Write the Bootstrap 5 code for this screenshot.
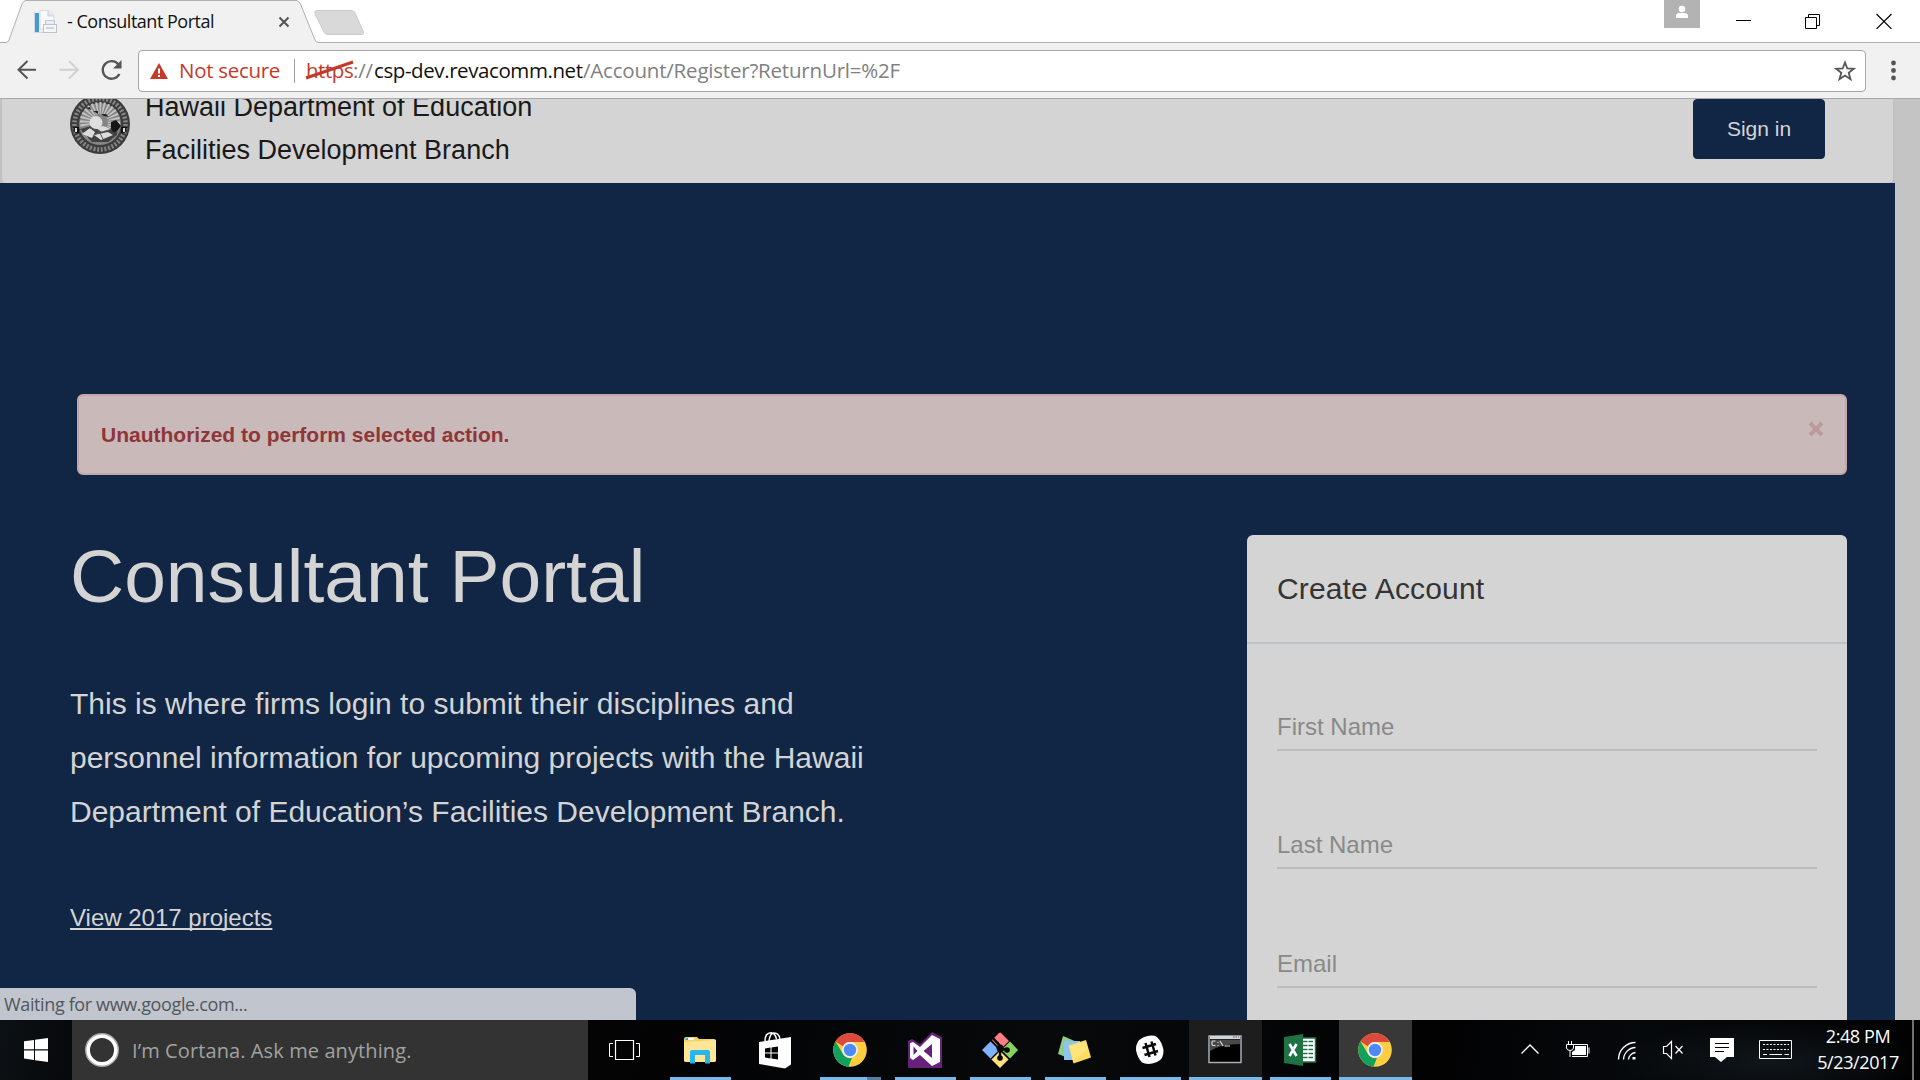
<!DOCTYPE html>
<html lang="en">
<head>
<meta charset="utf-8">
<title>- Consultant Portal</title>
<link href="https://cdn.jsdelivr.net/npm/bootstrap@5.3.0/dist/css/bootstrap.min.css" rel="stylesheet">
<style>
body{width:1920px;height:1080px;overflow:hidden;font-family:"Liberation Sans",Arial,sans-serif;background:#fff}
svg{display:block;flex:none}
.ui-font{font-family:"Open Sans","Noto Sans",sans-serif;white-space:nowrap}
.tab-strip{height:43px}
.tab-shape{z-index:0}
.tab-icon{margin-left:33px}
.tab-title{font-size:18px;letter-spacing:-.49px;color:#111;width:164px;margin-left:10px;line-height:24px;padding-bottom:1px}
.tab-close{margin:0 auto 0 47px}
.window-keys{margin:0 28px 2px 36px}
.tool-bar{height:56px;background:#f1f1f1;border-bottom:1px solid #a9a9a9}
.omnibox{width:1728px;height:42px;border:1px solid #a6a6a6;border-radius:4px;background:#fff;font-size:20.5px;line-height:30px}
.omni-text{margin-top:-2px}
.danger-ink{color:#c5392a}
.warn-label{margin-left:11px;width:100px;letter-spacing:-.3px}
.url-rule{width:1px;height:24px;background:#a0a0a0;margin-left:15px}
.url-text{margin-left:11px}
.scheme{letter-spacing:-.45px;width:47px}
.strike{left:-1px;top:5px}
.slashes{color:#808080;width:21px;letter-spacing:-.2px}
.domain{letter-spacing:-.41px;color:#111;width:209px}
.url-path{color:#808080;letter-spacing:-.2px}
.viewport{height:921px}
.page-area{width:1895px;background:#112644;color:#d4d4d4}
.scroll-track{width:25px;background:#c4c4c4}
.site-head{height:84px;background:#d4d4d4;border-left:2px solid #c1c1c1;border-right:2px solid #c1c1c1;border-radius:0 0 6px 6px}
.head-wrap{background:#c1c1c1}
.org-name{font-size:27px;line-height:42.67px;color:#191919;margin:-13px 0 0 15px;white-space:nowrap}
.seal{margin:-5px 0 0 68px}
.btn-sign{--bs-btn-bg:#112644;--bs-btn-color:#d4d4d4;--bs-btn-border-color:#112644;width:132px;height:60px;border-radius:4px;font-size:21px;margin-right:68px}
.warn-box{margin:211px 48px 60px 77px;height:81px;padding:24px 22px;background:#cab9b9;border:2px solid #c4a5aa;border-radius:6px;color:#8e3638;font-size:21px;line-height:30px}
.warn-x{margin:1px -1px 0 0}
.hero{margin:0 48px 0 70px}
.hero h1{font-size:75px;line-height:80px;margin:1px 0 61px;font-weight:400}
.hero p{font-size:30px;line-height:54px;margin-bottom:61px;white-space:nowrap}
.view-link{font-size:24px;line-height:36px;color:#d4d4d4;text-decoration-thickness:2px;text-underline-offset:2px;text-decoration-skip-ink:none}
.signup{width:600px;height:600px;background:#d4d4d4;border:0;border-radius:6px}
.signup .card-header{background:none;border-bottom:2px solid #bfc3c6;padding:31px 30px;height:109px;font-size:30px;line-height:45px;color:#343434;letter-spacing:.15px}
.signup .card-body{padding:65px 30px 0}
.field-line{height:42px;font-size:24px;line-height:36px;color:#898989;border-bottom:2px solid #bdbdbd;margin-bottom:76.3px;display:block}
.status-tip{left:0;bottom:0;width:636px;height:32px;background:#c1c6ce;color:#51565d;border-top-right-radius:6px;font-size:18px;letter-spacing:-.37px;padding-left:4px;line-height:33px}
.task-bar{height:60px;background:radial-gradient(ellipse at 50% 70%,#10161b 0,transparent 70%) 1620px 0/300px 60px no-repeat,linear-gradient(100deg,#0c1115,#07090b 4%,#030304 35%,#07090b 55%,#020203 75%,#06090c 85%,#020202)}
.start-btn{width:72px}
.cortana{width:516px;background:#333;color:#a2a2a2;font-size:20px}
.cortana-ring{margin-left:13px}
.cortana-hint{margin-left:13px;letter-spacing:.1px;padding-top:2px}
.slot{width:75px}
.slot .face{width:73px;height:60px;padding-top:13px}
.slot>svg{margin-right:2px}
.face>svg{margin-right:2px}
.face .lift{margin-top:-1px}
.face.open{background:#1d1d1d}
.face.active-app{background:#383838}
.run-bar{width:61px;height:3px;background:#76b9ed}
.face.open .run-bar,.face.active-app .run-bar{width:73px}
.run-bar.stacked{background:linear-gradient(90deg,#76b9ed 47px,#537fa5 47px)}
.clock{font-size:18px;line-height:26px;color:#fff;width:96px;letter-spacing:-.4px;margin-left:16px;padding-bottom:2px}
.peek{width:2px;background:#707070;margin:0 6px}
</style>
<script src="https://cdn.jsdelivr.net/npm/bootstrap@5.3.0/dist/js/bootstrap.bundle.min.js"></script>
</head>
<body class="d-flex flex-column">
<svg width="0" height="0" class="position-absolute">
  <symbol id="chrome" viewBox="0 0 34 34">
    <circle cx="17" cy="17" r="16.8" fill="#ffcd40"/>
    <path d="M17 .2A16.8 16.8 0 0 1 31.6 8.9H17A8.1 8.1 0 0 0 9.8 13.2L2.5 8.6A16.8 16.8 0 0 1 17 .2z" fill="#db4a3c"/>
    <path d="M2.5 8.6 10 21A8.1 8.1 0 0 0 19 24.8L15.500 33.7A16.8 16.8 0 0 1 2.5 8.6z" fill="#12a05d"/>
    <circle cx="17" cy="17" r="7.9" fill="#f1f1f1"/><circle cx="17" cy="17" r="6.2" fill="#4c8bf5"/>
  </symbol>
</svg>

<header class="tab-strip position-relative d-flex flex-none">
  <svg class="tab-shape position-absolute top-0 start-0" width="1920" height="43" viewBox="0 0 1920 43">
    <path d="M0 42.5H6Q8 42.5 9 40L22 4Q23.500 .5 26 .5H296Q299 .5 300.500 4L315 40Q316 42.500 319 42.500H1920V43H0z" fill="#f1f1f1" stroke="none"/>
    <path d="M0 42.5H6Q8 42.5 9 40L26 2Q27 .5 29 .5H240Q243 .5 244 2" fill="none" stroke="none"/>
    <path d="M0 42.5H6Q8 42.5 9 40L22 4Q23.500 .5 26 .5H296Q299 .5 300.500 4L315 40Q316 42.500 319 42.500H1920" fill="none" stroke="#b0b0b0"/>
    <path d="M317 10.500H351Q354 10.500 355 13L363.500 32Q364.500 34.500 361 34.500H328Q325 34.500 324 32L315 14Q314 10.500 317 10.500z" fill="#d9d9d9" stroke="#c9c9c9"/>
  </svg>
  <div class="position-relative d-flex align-items-center w-100">
    <svg class="tab-icon" width="24" height="24" viewBox="0 0 24 24">
      <path d="M1 2H16L22 7V22H1z" fill="#edf0f5"/><path d="M7 .5H16L21 5V19H7z" fill="#f8f9fb" stroke="#d7dbe2"/><path d="M15 1v5h6" fill="#dfe5ee" stroke="#cbd1da"/>
      <path d="M2 3H6V22H2z" fill="#4798d0"/><path d="M1.500 1.500V22.500H10" fill="none" stroke="#cbd9e5"/>
      <rect x="12.500" y="10.500" width="9" height="8" fill="#e8ecf2" stroke="#c5cad3"/><rect x="10.500" y="14.500" width="13" height="8" fill="#f4f6fa" stroke="#bcc3ce"/><path d="M13 18H21" stroke="#cfd5dd" stroke-width="2"/>
    </svg>
    <span class="ui-font tab-title">- Consultant Portal</span>
    <svg class="tab-close" width="12" height="12" viewBox="0 0 12 12"><path d="M1.500 1.500 10.500 10.500M10.500 1.500 1.500 10.500" stroke="#555" stroke-width="2"/></svg>
    <svg width="36" height="28" viewBox="0 0 36 28" class="align-self-start"><path d="M0 0H36V28H0z" fill="#b3b3b3"/><circle cx="18" cy="9" r="3.300" fill="#fff"/><path d="M12 18V15.500Q12 13 15.500 13H20.500Q24 13 24 15.500V18z" fill="#fff"/></svg>
    <svg class="window-keys" width="156" height="16" viewBox="0 0 156 16"><g transform="translate(0 -1)" fill="none" stroke="#000"><path d="M0 8.500H15"/><path d="M69.500 5.500H80.500V16.500H69.500zM72.500 5.500V2.500H83.500V13.500H80.500"/><path d="M140.500 2 155.500 17M155.500 2 140.500 17" stroke-width="1.100"/></g></svg>
  </div>
</header>

<nav class="tool-bar d-flex align-items-center ui-font">
  <svg width="138" height="55" viewBox="0 0 138 55" fill="none" stroke-width="2">
    <path d="M36 26.700H19M27.500 18 18.500 26.700 27.500 35.500" stroke="#555"/><path d="M59.500 26.700H77M69 18 78 26.700 69 35.500" stroke="#d0d0d0"/>
    <path d="M118.500 21.500A8.800 8.800 0 1 0 119.400 31" stroke="#555" stroke-width="2.300"/><path d="M121.500 17V25.500H113z" fill="#555"/>
  </svg>
  <div class="omnibox d-flex align-items-center">
    <svg class="ms-2 me-0" width="21" height="16" viewBox="-3 0 21 16"><path d="M9 0 18 16H0z" fill="#c5392a"/><path d="M9 5.500V10.500M9 12V14" stroke="#fff" stroke-width="2"/></svg>
    <span class="danger-ink warn-label omni-text">Not secure</span>
    <span class="url-rule"></span>
    <span class="position-relative d-flex url-text omni-text">
      <span class="danger-ink scheme">https</span>
      <svg class="position-absolute strike" width="50" height="22" viewBox="0 0 50 22"><path d="M1 18 48 2" stroke="#c5392a" stroke-width="3"/></svg>
      <span class="slashes">://</span><span class="domain">csp-dev.revacomm.net</span><span class="url-path">/Account/Register?ReturnUrl=%2F</span>
    </span>
    <svg class="ms-auto me-2" width="23" height="22" viewBox="0 0 23 22"><path d="M11 2.500 13.300 8.500 19.800 8.800 14.700 12.800 16.500 19.200 11 15.600 5.500 19.200 7.300 12.800 2.200 8.800 8.700 8.500z" fill="none" stroke="#555" stroke-width="1.800"/></svg>
  </div>
  <svg width="54" height="24" viewBox="0 0 54 24" fill="#555"><circle cx="27.500" cy="4" r="2.400"/><circle cx="27.500" cy="11.500" r="2.400"/><circle cx="27.500" cy="19" r="2.400"/></svg>
</nav>

<div class="viewport d-flex position-relative overflow-hidden">
  <main class="page-area overflow-hidden d-flex flex-column">
    <div class="head-wrap">
      <div class="site-head d-flex align-items-start overflow-hidden">
        <svg class="seal" width="60" height="60" viewBox="0 0 60 60">
          <circle cx="30" cy="30" r="30" fill="#3c3c3c"/><circle cx="30" cy="30" r="25.500" fill="none" stroke="#858585" stroke-width="4.500" stroke-dasharray="2 1.700"/><circle cx="30" cy="30" r="21.500" fill="#858585" stroke="#3a3a3a"/>
          <circle cx="30" cy="28" r="14" fill="none" stroke="#c4c4c4" stroke-width="12" stroke-dasharray="1.600 1.500"/>
          <path d="M10 35 20 32 30 36 48 33 47 41 38 48 22 48z" fill="#414141"/>
          <circle cx="26" cy="28.500" r="6.500" fill="#dedede"/>
          <path d="M12 40 20 34 25 38 22 44zM26 34 33 32 41 35 32 38zM24 41 38 38 43 41 31 46z" fill="#dcdcdc"/><path d="M25 40 39 36M30 39 33 45M20 34 30 38" stroke="#555"/>
          <path d="M41 28 46 26 51 32 47 37 43 38 41 34z" fill="#161616"/>
          <path d="M16 14 20 13 21 16zM23 17 28 17 28 20zM31 20 36 20 39 23 34 22z" fill="#222"/>
          <path d="M3 33H9V39H5zM51 33H57L55 39H51z" fill="#111"/><path d="M6 34V38M54 34V38" stroke="#ddd" stroke-width="2"/>
        </svg>
        <div class="org-name">Hawaii Department of Education<br>Facilities Development Branch</div>
        <button class="btn btn-sign ms-auto" type="button">Sign in</button>
      </div>
    </div>
    <div class="warn-box d-flex justify-content-between" role="alert">
      <strong>Unauthorized to perform selected action.</strong>
      <svg class="warn-x" width="16" height="16" viewBox="0 0 16 16"><path d="M2 2 14 14M14 2 2 14" stroke="#ba9a9c" stroke-width="4"/></svg>
    </div>
    <div class="hero d-flex justify-content-between align-items-start">
      <section>
        <h1>Consultant Portal</h1>
        <p>This is where firms login to submit their disciplines and<br>personnel information for upcoming projects with the Hawaii<br>Department of Education’s Facilities Development Branch.</p>
        <a class="view-link d-block" href="#">View 2017 projects</a>
      </section>
      <section class="card signup">
        <div class="card-header">Create Account</div>
        <form class="card-body">
          <label class="field-line">First Name</label>
          <label class="field-line">Last Name</label>
          <label class="field-line">Email</label>
        </form>
      </section>
    </div>
  </main>
  <div class="scroll-track"></div>
  <div class="status-tip position-absolute ui-font">Waiting for www.google.com...</div>
</div>

<footer class="task-bar d-flex">
  <div class="start-btn d-flex align-items-center justify-content-center"><svg width="24" height="24" viewBox="0 0 24 24" fill="#fff"><path d="M0 3.300 10 2V11.300H0zM11 1.800 24 0V11.300H11zM0 12.500H10V21.900L0 20.600zM11 12.500H24V24L11 22.200z"/></svg></div>
  <div class="cortana ui-font d-flex align-items-center">
    <svg class="cortana-ring" width="34" height="34" viewBox="0 0 34 34"><circle cx="17" cy="17" r="14.800" fill="none" stroke="#aaa" stroke-width="4.400"/><circle cx="17" cy="17" r="13.800" fill="none" stroke="#fff" stroke-width="3.500"/></svg>
    <span class="cortana-hint">I’m Cortana. Ask me anything.</span>
  </div>
  <div class="slot d-flex align-items-center justify-content-center"><svg width="32" height="22" viewBox="0 0 32 22" fill="none" stroke="#fff"><path d="M6.500 1.500H24.500V20.500H6.500z" stroke-width="1.200"/><path d="M4 4.500H.500V17.500H4M27 4.500H30.500V17.500H27"/></svg></div>

  <div class="slot d-flex justify-content-center"><div class="face d-flex flex-column align-items-center justify-content-between">
    <svg width="34" height="34" viewBox="0 0 34 34"><path d="M1 6Q1 4 3 4H14L16 6H31Q33 6 33 8V27Q33 29 31 29H3Q1 29 1 27z" fill="#f6d365"/><path d="M1 9 33 7V27Q33 29 31 29H3Q1 29 1 27z" fill="#ffe596"/><path d="M3 6H11" stroke="#fff" stroke-width="2"/><path d="M2.500 6H5" stroke="#28afea" stroke-width="2"/><path d="M7 30.500V19Q7 17 9 17H25Q27 17 27 19V30.500H22V22H12V30.500z" fill="#27b6ee"/></svg>
    <span class="run-bar"></span></div></div>
  <div class="slot d-flex justify-content-center"><div class="face d-flex flex-column align-items-center">
    <svg class="lift" width="34" height="38" viewBox="0 0 34 38"><path d="M1 10 33 5V32.500L27 36.500 1 32z" fill="#fff"/><path d="M7 9Q7 1 13 .800 17 .800 18.500 7M11 9Q12 1 16 1 21 1 22 7" fill="none" stroke="#fff" stroke-width="1.500"/><path d="M7 16.500 12.500 15.600V20.500H7zM13.500 15.400 20 14.400V20.500H13.500zM7 21.600H12.500V26.500L7 25.600zM13.500 21.600H20V27.500L13.500 26.600z" fill="#000"/></svg></div></div>
  <div class="slot d-flex justify-content-center"><div class="face d-flex flex-column align-items-center justify-content-between">
    <svg width="34" height="34"><use href="#chrome"/></svg><span class="run-bar stacked"></span></div></div>
  <div class="slot d-flex justify-content-center"><div class="face d-flex flex-column align-items-center justify-content-between">
    <svg class="lift" width="34" height="36" viewBox="0 0 34 36"><path d="M0 9 4 7 12 12 24 0 34 5V36H0z" fill="#68217a"/><path fill-rule="evenodd" d="M2 11 5 10 12 15 24 3 32 7V30L24 34 12 23 5 28 2 26zM5.500 14.500V23L9.500 19zM24 12 15.500 19 24 26z" fill="#fff"/></svg>
    <span class="run-bar"></span></div></div>
  <div class="slot d-flex justify-content-center"><div class="face d-flex flex-column align-items-center justify-content-between">
    <svg class="lift" width="36" height="36" viewBox="0 0 36 36"><path d="M0 18 8.500 9.500 17 18 8.500 26.500z" fill="#80b3ff"/><path d="M10 8 17 1Q18 0 19 1L27 9 18.500 17.500z" fill="#ff7e86"/><path d="M19.500 18 28 9.500 36 18 28 26.500z" fill="#87d35f"/><path d="M9.500 27.500 18 19 26.500 27.500 18 36z" fill="#ffe27e"/><path d="M10 5 18 14V26M18 18 25 17M15 10 18 14" fill="none" stroke="#050505" stroke-width="2.400"/><circle cx="18" cy="16" r="3.500" fill="#050505"/><circle cx="18" cy="26" r="2.800" fill="#050505"/><circle cx="25" cy="18" r="2.800" fill="#050505"/></svg>
    <span class="run-bar"></span></div></div>
  <div class="slot d-flex justify-content-center"><div class="face d-flex flex-column align-items-center justify-content-between">
    <svg width="36" height="34" viewBox="0 0 36 34"><path d="M6 3 20 9 14 26 1 21z" fill="#8ecf83"/><path d="M7 8H23V27H7z" fill="#8cc3f0"/><path d="M11.500 12.500 29 7 34 24.500 16.500 30.500z" fill="#ffdc62"/><path d="M13 13 29 8 31 16 16 27z" fill="#ffe88c" opacity=".6"/></svg>
    <span class="run-bar"></span></div></div>
  <div class="slot d-flex justify-content-center"><div class="face d-flex flex-column align-items-center justify-content-between">
    <svg width="30" height="34" viewBox="0 0 30 34"><path d="M8 4.500Q17 1 22 4 27 9 28.500 17 29 26 22 29 13 32.500 7 29.500 2.500 25 1 17 .500 8 8 4.500z" fill="#fff"/><path d="M10.500 10 14.500 24M16.500 8.500 20.500 22.500M7.500 15 21 11M9.500 22 23 18" stroke="#0a0a0a" stroke-width="2.500"/></svg>
    <span class="run-bar"></span></div></div>
  <div class="slot d-flex justify-content-center"><div class="face open d-flex flex-column align-items-center justify-content-between">
    <svg width="34" height="34" viewBox="0 0 34 34"><rect x="1" y="3" width="32" height="26.500" fill="#000" stroke="#a7adb5" stroke-width="1.500"/><path d="M2 4.500H32" stroke="#cfd4da" stroke-width="3"/><path d="M25 4H31" stroke="#555" stroke-dasharray="1.500 1"/><path d="M2 6.500H32V11Q13 11 2 18z" fill="#484848"/><path d="M7.500 8H5Q4 8 4 9.500V11Q4 12.500 5 12.500H7.500M10 9V10M10 12V13M12 8 15 13M16.500 13H22" fill="none" stroke="#ddd" stroke-width="1.200"/></svg>
    <span class="run-bar"></span></div></div>
  <div class="slot d-flex justify-content-center"><div class="face d-flex flex-column align-items-center justify-content-between">
    <svg width="34" height="34" viewBox="0 0 34 34"><path d="M18 5H32.500V29H18z" fill="#fff" stroke="#207245" stroke-width="1.500"/><path d="M20 8.500H30M20 12.500H30M20 16.500H30M20 20.500H30M20 24.500H30" stroke="#207245" stroke-width="1.500" stroke-dasharray="4.500 1"/><path d="M1 4 20 1V33L1 30z" fill="#207245"/><path d="M6.500 11 13.500 23M13.500 11 6.500 23" stroke="#fff" stroke-width="2.600"/></svg>
    <span class="run-bar"></span></div></div>
  <div class="slot d-flex justify-content-center"><div class="face active-app d-flex flex-column align-items-center justify-content-between">
    <svg width="34" height="34"><use href="#chrome"/></svg><span class="run-bar"></span></div></div>

  <div class="d-flex align-items-center ms-auto">
    <svg width="274" height="40" viewBox="1520 1030 274 40" fill="none" stroke="#fff">
      <path d="M1521.500 1053.500 1530 1045 1538.500 1053.500" stroke-width="1.400"/>
      <path d="M1573.500 1044.500H1587.500V1056.500H1572M1589 1047.500V1053.500"/><path d="M1575 1046H1586V1055H1572V1052L1575 1050z" fill="#fff" stroke="none"/><path d="M1568.500 1041V1044M1571.500 1041V1044M1566.500 1044.500H1573.500V1048Q1573 1050.500 1570 1050.500 1567 1050.500 1566.500 1048zM1570 1050.500V1057"/>
      <path d="M1618.500 1059.500A17 17 0 0 1 1635.500 1042.500M1623.500 1059.500A12.500 12.500 0 0 1 1635.500 1047.500M1628.500 1059.500A8 8 0 0 1 1635.500 1052.500" stroke-width="1.300"/><path d="M1632.500 1057H1635.500V1059.500H1632.500z" fill="#fff" stroke="none"/>
      <path d="M1663.500 1046.500H1666.500L1671.500 1041.500V1058.500L1666.500 1053.500H1663.500zM1675.500 1046 1682.500 1053.500M1682.500 1046 1675.500 1053.500" stroke-width="1.200"/>
      <path d="M1710 1038H1734V1057H1727L1721 1062 1715 1057H1710z" fill="#fff" stroke="none"/><path d="M1715 1043.500H1729M1715 1047.500H1729M1715 1051.500H1724" stroke="#000"/>
      <path d="M1759.500 1040.500H1791.500V1058.500H1759.500z"/><path d="M1763 1044.500H1789M1763 1049.500H1789" stroke-dasharray="2 1.500"/><path d="M1763 1054.500H1767M1769.500 1054.500H1782M1784.500 1054.500H1789"/>
    </svg>
    <div class="clock ui-font text-center"><div>2:48 PM</div><div>5/23/2017</div></div>
    <span class="peek align-self-stretch"></span>
  </div>
</footer>
</body>
</html>
